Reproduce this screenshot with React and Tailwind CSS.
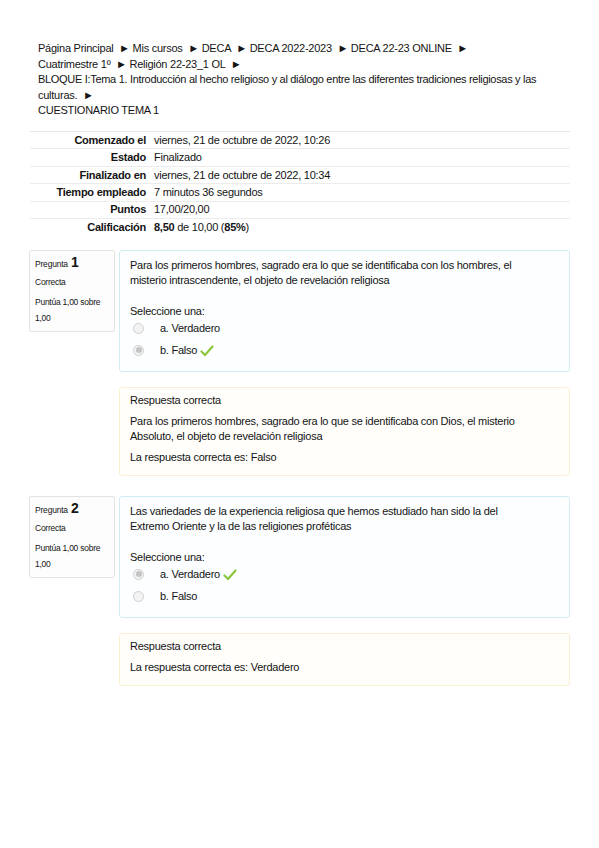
import React from "react";

const font = { fontFamily: '"Liberation Sans", Arial, sans-serif' };

function Check() {
  return (
    <svg width="14" height="12" viewBox="0 0 14 12" className="inline-block ml-[3px] -mb-[1px]">
      <path d="M1.5 6.5 L5 10 L12.5 1.5" fill="none" stroke="#8cc63f" strokeWidth="2.2" strokeLinecap="round" strokeLinejoin="round" />
    </svg>
  );
}

function Radio({ checked }) {
  return (
    <span className="w-[11px] h-[11px] rounded-full border border-[#cfcfcf] bg-[#f3f3f3] flex items-center justify-center">
      {checked && <span className="w-[6px] h-[6px] rounded-full bg-[#c4c4c4]" />}
    </span>
  );
}

function Option({ label, checked, correct }) {
  return (
    <div className="flex items-center h-[22px]">
      <div className="w-[30px] flex justify-start pl-[3px]">
        <Radio checked={checked} />
      </div>
      <span>{label}</span>
      {correct && <Check />}
    </div>
  );
}

function Info({ n }) {
  return (
    <div className="w-[86px] h-[82px] shrink-0 border border-[#e3e3e3] rounded-[2px] bg-[#fdfdfd] pl-[5px] pt-[1px]">
      <div className="flex items-baseline">
        <span className="text-[8.5px] tracking-[-0.2px]">Pregunta</span>
        <span className="text-[14px] font-bold ml-[3px]">{n}</span>
      </div>
      <div className="text-[8.5px] mt-[3px]">Correcta</div>
      <div className="text-[8.5px] mt-[5px] leading-[16px]">Puntúa 1,00 sobre<br />1,00</div>
    </div>
  );
}

function Question({ n, lines, options, feedback }) {
  return (
    <div className="flex gap-[4px]">
      <Info n={n} />
      <div className="flex-1 flex flex-col">
        <div className="border border-[#d3ecf3] rounded-[3px] bg-[#fcfeff] pl-[10px] pt-[7px] pb-[10px] leading-[15px]">
          <div>{lines.map((l, i) => <div key={i}>{l}</div>)}</div>
          <div className="mt-[16px]">Seleccione una:</div>
          <div className="-mt-[2px]">
            {options.map((o, i) => <Option key={i} {...o} />)}
          </div>
        </div>
        <div className="mt-[15px] border border-[#fbeed3] rounded-[3px] bg-[#fffefb] pl-[10px] pt-[5px] pb-[10px] leading-[15px]">
          {feedback.map((f, i) => (
            <div key={i} className={i > 0 ? "mt-[6px]" : ""}>{f.map((l, j) => <div key={j}>{l}</div>)}</div>
          ))}
        </div>
      </div>
    </div>
  );
}

const rows = [
  ["Comenzado el", "viernes, 21 de octubre de 2022, 10:26"],
  ["Estado", "Finalizado"],
  ["Finalizado en", "viernes, 21 de octubre de 2022, 10:34"],
  ["Tiempo empleado", "7 minutos 36 segundos"],
  ["Puntos", "17,00/20,00"],
  ["Calificación", <><b>8,50</b> de 10,00 (<b>85%</b>)</>],
];

export default function App() {
  return (
    <div className="w-[599px] min-h-[848px] bg-white text-[#141414] text-[11px] tracking-[-0.25px]" style={font}>
      <div className="pl-[30px] pr-[29px] pt-[41px]">
        <div className="pl-[8px] leading-[15.6px]">
          <div>Página Principal &nbsp;► Mis cursos &nbsp;► DECA &nbsp;► DECA 2022-2023 &nbsp;► DECA 22-23 ONLINE &nbsp;►</div>
          <div>Cuatrimestre 1º &nbsp;► Religión 22-23_1 OL &nbsp;►</div>
          <div className="tracking-[-0.31px]">BLOQUE I:Tema 1. Introducción al hecho religioso y al diálogo entre las diferentes tradiciones religiosas y las</div>
          <div>culturas. &nbsp;►</div>
          <div>CUESTIONARIO TEMA 1</div>
        </div>
        <div className="mt-[12px]">
          {rows.map(([k, v], i) => (
            <div key={i} className={"flex items-center h-[17.4px] border-t " + (i === 0 ? "border-[#e6e6e6]" : "border-[#ececec]")}>
              <div className="w-[120px] text-right pr-[4px] font-bold">{k}</div>
              <div className="pl-[4px]">{v}</div>
            </div>
          ))}
        </div>
        <div className="mt-[15px] -ml-[1px] flex flex-col gap-[20px]">
          <Question
            n="1"
            lines={[
              "Para los primeros hombres, sagrado era lo que se identificaba con los hombres, el",
              "misterio intrascendente, el objeto de revelación religiosa",
            ]}
            options={[
              { label: "a. Verdadero" },
              { label: "b. Falso", checked: true, correct: true },
            ]}
            feedback={[
              ["Respuesta correcta"],
              ["Para los primeros hombres, sagrado era lo que se identificaba con Dios, el misterio", "Absoluto, el objeto de revelación religiosa"],
              ["La respuesta correcta es: Falso"],
            ]}
          />
          <Question
            n="2"
            lines={[
              "Las variedades de la experiencia religiosa que hemos estudiado han sido la del",
              "Extremo Oriente y la de las religiones proféticas",
            ]}
            options={[
              { label: "a. Verdadero", checked: true, correct: true },
              { label: "b. Falso" },
            ]}
            feedback={[
              ["Respuesta correcta"],
              ["La respuesta correcta es: Verdadero"],
            ]}
          />
        </div>
      </div>
    </div>
  );
}
